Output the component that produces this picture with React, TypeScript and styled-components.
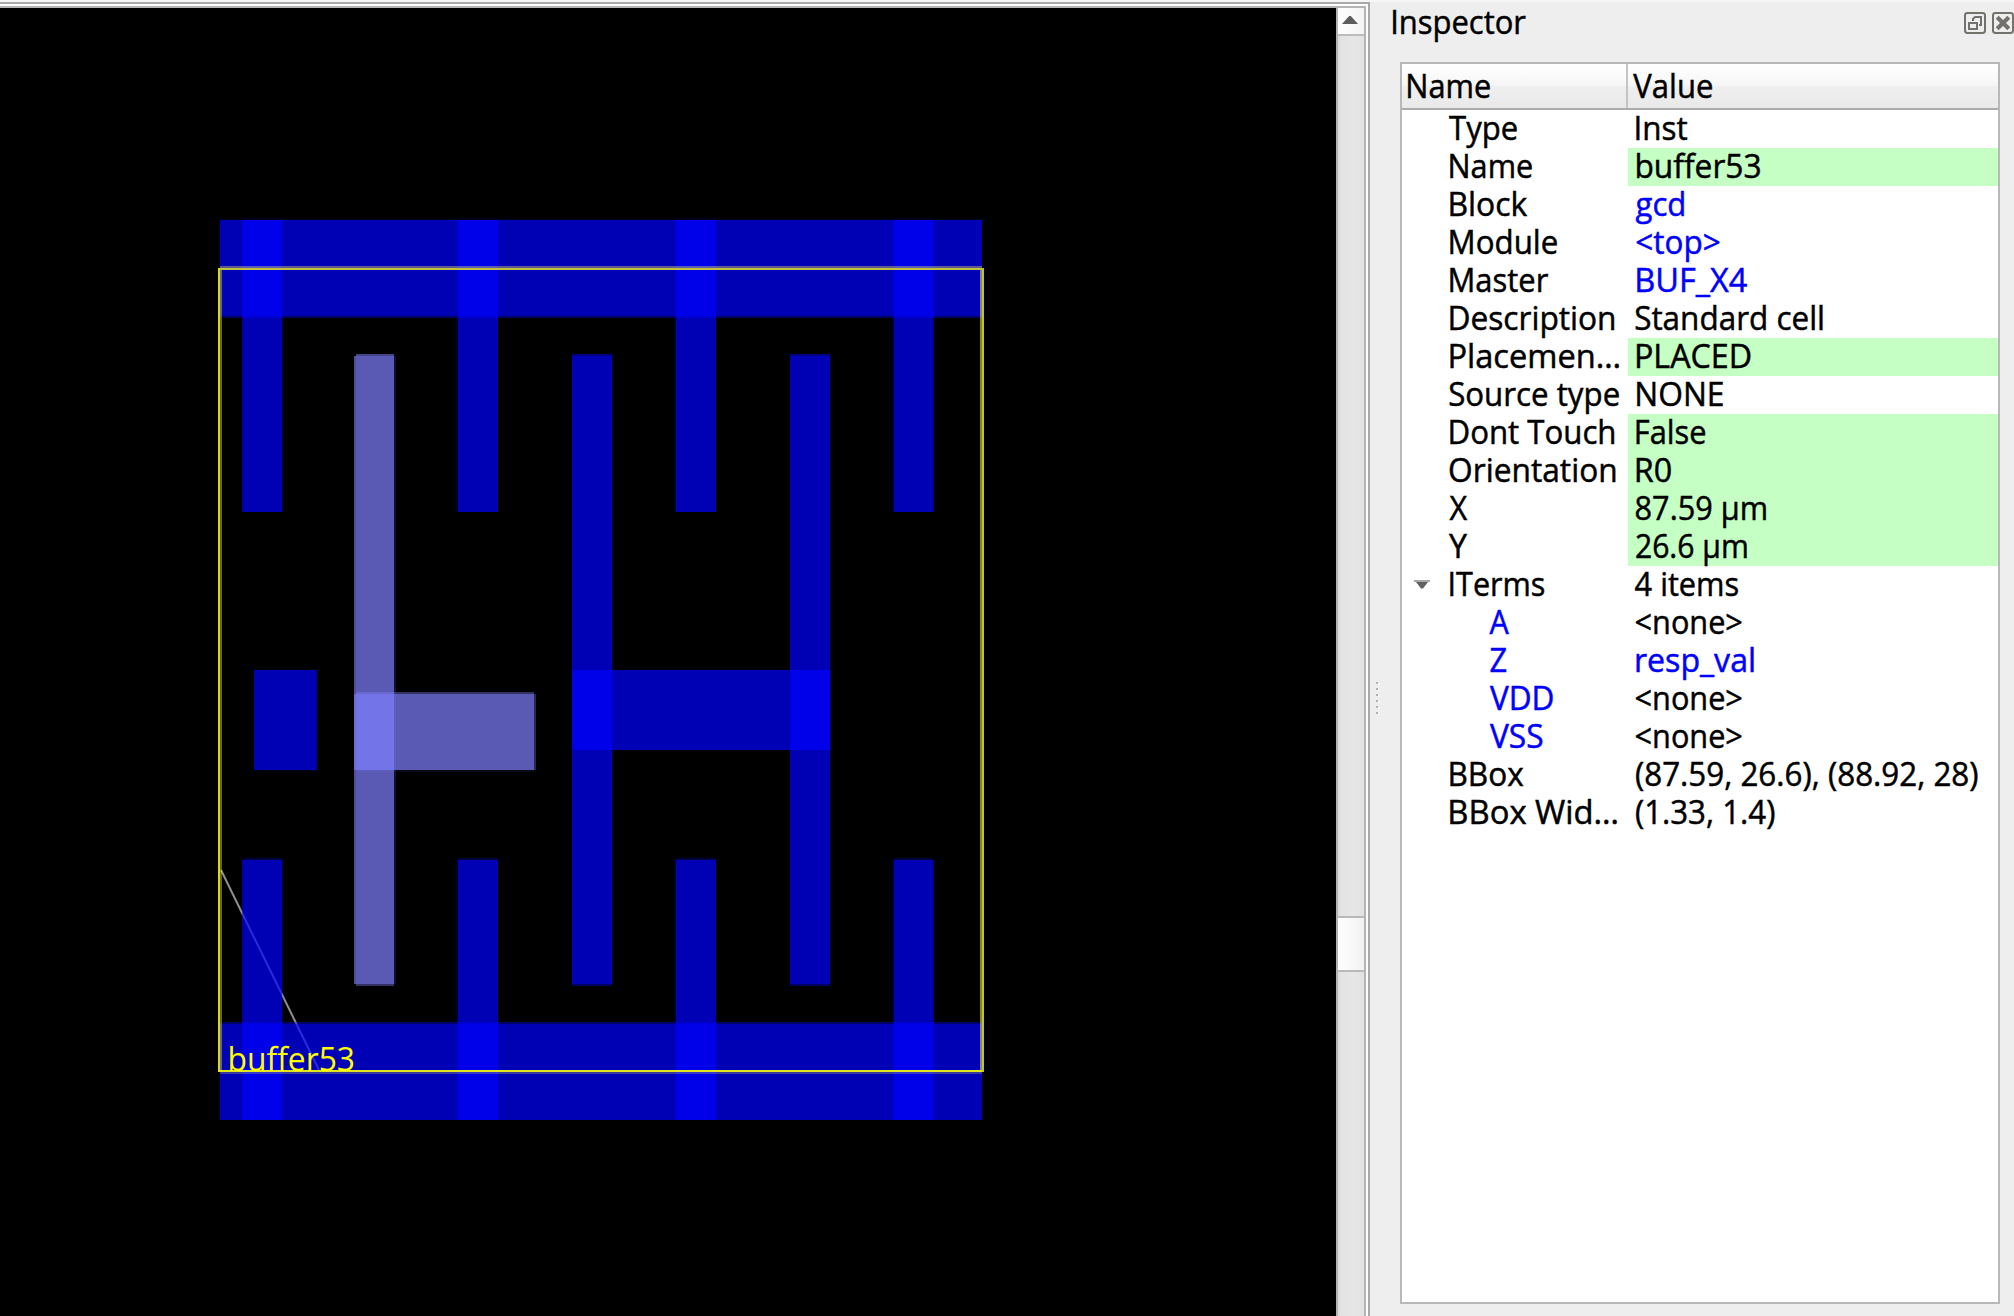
import React from "react";
import styled, { createGlobalStyle } from "styled-components";

const FAMILY = '"Open Sans", "Noto Sans", sans-serif';
const FONT_SIZE = 33.6;

const GlobalStyle = createGlobalStyle`
  html, body { margin: 0; padding: 0; background: #eeeeee; }
  body { overflow: hidden; font-family: ${FAMILY}; }
  * { box-sizing: border-box; }
`;

/* ---------- condensed label ---------- */

const LabelText = styled.span<{ $link?: boolean }>`
  display: block;
  flex: none;
  width: max-content;
  white-space: pre;
  font-family: ${FAMILY};
  font-size: ${FONT_SIZE}px;
  line-height: 38px;
  color: ${(p) => (p.$link ? "#0000ff" : "#000000")};
  -webkit-text-stroke: 0.5px currentColor;
  transform-origin: 0 50%;
`;

let measuring: CanvasRenderingContext2D | null = null;

function inkBox(text: string) {
  if (!measuring) measuring = document.createElement("canvas").getContext("2d");
  if (!measuring) return { left: 0, width: 1 };
  measuring.font = `${FONT_SIZE}px ${FAMILY}`;
  const m = measuring.measureText(text);
  return {
    left: -m.actualBoundingBoxLeft,
    width: m.actualBoundingBoxRight + m.actualBoundingBoxLeft,
  };
}

/* Squeezes the glyphs so that the ink spans `width` and begins `inset` px in. */
function Label({ text, inset, width, link }: { text: string; inset: number; width: number; link?: boolean }) {
  const ink = inkBox(text);
  const scale = (width - 0.8) / ink.width;
  const shift = inset + 0.8 - ink.left * scale;
  return (
    <LabelText $link={link} style={{ transform: `translate(${shift.toFixed(2)}px, -2px) scaleX(${scale.toFixed(4)})` }}>
      {text}
    </LabelText>
  );
}

/* ---------- shell ---------- */

const Window = styled.div`
  display: flex;
  flex-direction: column;
  width: 2014px;
  height: 1316px;
  background: #eeeeee;
  overflow: hidden;
`;

const TopStrip = styled.div`
  flex: none;
  height: 2px;
  background: #f6f6f6;
`;

const Main = styled.div`
  display: flex;
  flex: 1;
  min-height: 0;
`;

const ViewFrame = styled.div`
  flex: none;
  width: 1370px;
  border-top: 2px solid #a9a9a9;
  border-right: 2px solid #a9a9a9;
  padding: 2px 2px 0 0;
  background: #fdfdfd;
  display: flex;
`;

const ScrollArea = styled.div`
  flex: 1;
  display: flex;
  border-top: 2px solid #b4b4b4;
  border-right: 2px solid #b4b4b4;
`;

const Canvas = styled.div`
  flex: none;
  width: 1336px;
  background: #000000;
  overflow: hidden;
  svg { display: block; }
`;

const ScrollBar = styled.div`
  flex: 1;
  display: flex;
  flex-direction: column;
  border-left: 2px solid #b4b4b4;
`;

const ScrollButton = styled.div`
  flex: none;
  height: 28px;
  display: flex;
  justify-content: center;
  padding-top: 8px;
  padding-right: 2px;
  border-bottom: 2px solid #bcbcbc;
  background: linear-gradient(90deg, #ffffff, #f3f3f3);
`;

const Trough = styled.div<{ $height?: number }>`
  flex: ${(p) => (p.$height ? `0 0 ${p.$height}px` : "1")};
  border-left: 2px solid #dcdcdc;
  background: linear-gradient(90deg, #e3e3e3, #e6e6e6 60%, #e2e2e2);
`;

const Thumb = styled.div`
  flex: none;
  height: 56px;
  border-top: 2px solid #b9b9b9;
  border-bottom: 2px solid #b9b9b9;
  background: linear-gradient(90deg, #ffffff, #f2f2f2);
`;

const Grip = styled.div`
  flex: none;
  width: 30px;
  padding: 680px 0 0 6px;
`;

const Dot = styled.div`
  width: 2px;
  height: 2px;
  margin-bottom: 4px;
  background: #b2b2b2;
  box-shadow: 2px 1px 0 #f8f8f8;
`;

/* ---------- inspector ---------- */

const Dock = styled.div`
  flex: 1;
  display: flex;
  flex-direction: column;
  padding-bottom: 12px;
`;

const TitleBar = styled.div`
  flex: none;
  height: 60px;
  display: flex;
  justify-content: space-between;
  align-items: flex-start;
  padding-top: 2px;
  margin-left: -10px;
`;

const DockButtons = styled.div`
  display: flex;
  gap: 6px;
  padding-top: 8px;
`;

const Tree = styled.div`
  flex: 1;
  width: 600px;
  border: 2px solid #b8b8b8;
  background: #ffffff;
`;

const TreeHeader = styled.div`
  display: flex;
  height: 46px;
  border-bottom: 2px solid #ababab;
  background: linear-gradient(#ffffff 0%, #f6f6f6 48%, #efefef 52%, #e9e9e9 100%);
`;

const HeaderCell = styled.div<{ $width?: number }>`
  flex: ${(p) => (p.$width ? `0 0 ${p.$width}px` : "1")};
  padding-top: 4px;
  border-right: ${(p) => (p.$width ? "2px solid #c4c4c4" : "0")};
`;

const Row = styled.div`
  display: grid;
  grid-template-columns: 226px 370px;
  height: 38px;
`;

const NameCell = styled.div<{ $depth: number }>`
  min-width: 0;
  display: flex;
  padding-left: ${(p) => 46 + p.$depth * 40}px;
`;

const ValueCell = styled.div<{ $editable?: boolean }>`
  min-width: 0;
  background: ${(p) => (p.$editable ? "#c6ffc4" : "transparent")};
`;

const Expander = styled.div`
  flex: none;
  width: 46px;
  margin-left: -46px;
  padding: 14px 0 0 12px;
  svg { display: block; }
`;

type Item = {
  name: string;
  ni: number;
  nw: number;
  value: string;
  vi: number;
  vw: number;
  editable?: boolean;
  nameLink?: boolean;
  valueLink?: boolean;
  depth?: number;
  open?: boolean;
};

const items: Item[] = [
  { name: "Type", ni: 0.3, nw: 69.2, value: "Inst", vi: 7.5, vw: 52.2 },
  { name: "Name", ni: 1.5, nw: 82.9, value: "buffer53", vi: 7.5, vw: 125, editable: true },
  { name: "Block", ni: 1.5, nw: 78.1, value: "gcd", vi: 6.7, vw: 49.3, valueLink: true },
  { name: "Module", ni: 1.5, nw: 108, value: "<top>", vi: 7.5, vw: 84.1, valueLink: true },
  { name: "Master", ni: 1.5, nw: 99.1, value: "BUF_X4", vi: 8.3, vw: 110.8, valueLink: true },
  { name: "Description", ni: 1.5, nw: 164.6, value: "Standard cell", vi: 6.3, vw: 188.4 },
  { name: "Placemen…", ni: 1.5, nw: 169.5, value: "PLACED", vi: 8, vw: 114.8, editable: true },
  { name: "Source type", ni: 0.3, nw: 171.1, value: "NONE", vi: 8.3, vw: 86.6 },
  { name: "Dont Touch", ni: 1.5, nw: 164.6, value: "False", vi: 7.8, vw: 70, editable: true },
  { name: "Orientation", ni: 1.2, nw: 166, value: "R0", vi: 7.8, vw: 35.2, editable: true },
  { name: "X", ni: 0.7, nw: 19, value: "87.59 µm", vi: 6.7, vw: 131.4, editable: true },
  { name: "Y", ni: 0.3, nw: 19, value: "26.6 µm", vi: 7, vw: 112, editable: true },
  { name: "ITerms", ni: 1.5, nw: 95, value: "4 items", vi: 5.8, vw: 104.5, open: true },
  { name: "A", ni: 0.6, nw: 20.8, value: "<none>", vi: 6.7, vw: 107.1, depth: 1, nameLink: true },
  { name: "Z", ni: 1.5, nw: 16.4, value: "resp_val", vi: 7.1, vw: 118.6, depth: 1, nameLink: true, valueLink: true },
  { name: "VDD", ni: 1.1, nw: 64.1, value: "<none>", vi: 6.7, vw: 107.1, depth: 1, nameLink: true },
  { name: "VSS", ni: 1.1, nw: 53.1, value: "<none>", vi: 6.7, vw: 107.1, depth: 1, nameLink: true },
  { name: "BBox", ni: 1.5, nw: 73.7, value: "(87.59, 26.6), (88.92, 28)", vi: 7.1, vw: 342.6 },
  { name: "BBox Wid…", ni: 1.5, nw: 167.5, value: "(1.33, 1.4)", vi: 7.1, vw: 139.4 },
];

/* ---------- icons ---------- */

const ICON = "#74726c";

const FloatIcon = () => (
  <svg width="22" height="22" viewBox="0 0 11 11" fill="none" stroke={ICON}>
    <rect x="0.5" y="0.5" width="10" height="10" rx="1.2" />
    <path d="M4.5 4.5V3.5L5.5 2.5H8.5V6.5H7.5" />
    <rect x="2.5" y="5.5" width="4" height="3" />
  </svg>
);

const CloseIcon = () => (
  <svg width="22" height="22" viewBox="0 0 11 11" fill="none" stroke={ICON}>
    <rect x="0.5" y="0.5" width="10" height="10" rx="1.2" />
    <path d="M2.6 2.6L8.4 8.4M8.4 2.6L2.6 8.4" strokeWidth="2.1" />
  </svg>
);

const UpArrow = () => (
  <svg width="16" height="8" viewBox="0 0 16 8">
    <path d="M7.2 0h1.6L16 8H0z" fill="#5c5c5c" />
  </svg>
);

const DownArrow = () => (
  <svg width="16" height="10" viewBox="0 0 16 10">
    <path d="M0 0h16v2H0z" fill="#a8a8a8" />
    <path d="M2 2h12L9 8.4H7z" fill="#606060" />
  </svg>
);

/* ---------- cell layout ---------- */

type Edges = { l?: number; t?: number; r?: number; b?: number };
type Shape = { x: number; y: number; x2: number; y2: number; e?: Edges; picked?: boolean };

const column = (x: number, x2: number, e: Edges): Shape[] => [
  { x, x2, y: 220, y2: 512, e: { ...e, t: 0.08 } },
  { x, x2, y: 860, y2: 1120, e: { ...e, t: 0.35 } },
];

const shapes: Shape[] = [
  { x: 220, x2: 982, y: 220, y2: 316, e: { l: 0.1, t: 0.08, b: 0.55 } },
  { x: 220, x2: 982, y: 1024, y2: 1120, e: { l: 0.1, t: 0.6, r: 0.05 } },
  ...column(244, 282, { l: 0.88, r: 0.15 }),
  ...column(458, 498, { l: 0.22 }),
  ...column(676, 716, { l: 0.24 }),
  ...column(894, 932, { l: 0.28, r: 0.85 }),
  { x: 572, x2: 612, y: 356, y2: 984, e: { t: 0.75, r: 0.12, b: 0.55 } },
  { x: 790, x2: 830, y: 356, y2: 984, e: { t: 0.75, r: 0.12, b: 0.55 } },
  { x: 572, x2: 830, y: 670, y2: 750, e: { r: 0.12 } },
  { x: 254, x2: 316, y: 670, y2: 770, e: { r: 0.5, b: 0.08 } },
  { x: 356, x2: 394, y: 356, y2: 984, e: { l: 0.85, t: 0.75, r: 0.2, b: 0.55 }, picked: true },
  { x: 356, x2: 534, y: 694, y2: 770, e: { l: 0.85, t: 0.55, r: 0.45, b: 0.1 }, picked: true },
];

function Metal({ x, y, x2, y2, e = {}, picked }: Shape) {
  const w = x2 - x;
  const h = y2 - y;
  return (
    <g fill={picked ? "#8080ff" : "#0000ff"} fillOpacity={0.706}>
      <rect x={x} y={y} width={w} height={h} />
      {e.l && <rect x={x - 2} y={y} width={2} height={h} opacity={e.l} />}
      {e.r && <rect x={x2} y={y} width={2} height={h} opacity={e.r} />}
      {e.t && <rect x={x} y={y - 2} width={w} height={2} opacity={e.t} />}
      {e.b && <rect x={x} y={y2} width={w} height={2} opacity={e.b} />}
    </g>
  );
}

const Layout = () => (
  <svg width="1336" height="1308" viewBox="0 8 1336 1308" shapeRendering="crispEdges">
    <path d="M221 870L319 1070" stroke="#909090" strokeWidth="2" shapeRendering="auto" />
    {shapes.map((s, i) => (
      <Metal key={i} {...s} />
    ))}
    <g fill="#ffff50">
      <rect x="220" y="266" width="762" height="2" opacity="0.36" />
      <rect x="220" y="270" width="2" height="800" opacity="0.4" />
      <rect x="980" y="270" width="2" height="800" opacity="0.52" />
      <rect x="220" y="1072" width="762" height="2" opacity="0.22" />
    </g>
    <rect x="218" y="268" width="766" height="2" fill="#c1c13c" />
    <rect x="218" y="268" width="2" height="804" fill="#d8d81e" />
    <rect x="982" y="268" width="2" height="804" fill="#c4c428" />
    <rect x="218" y="1070" width="764" height="2" fill="#e4e41e" />
    <text
      x="227.5"
      y="1071"
      fill="#ffff00"
      fontFamily={FAMILY}
      fontSize="32"
      textLength="127.5"
      lengthAdjust="spacingAndGlyphs"
    >
      buffer53
    </text>
  </svg>
);

export default function App() {
  return (
    <Window>
      <GlobalStyle />
      <TopStrip />
      <Main>
        <ViewFrame>
          <ScrollArea>
            <Canvas>
              <Layout />
            </Canvas>
            <ScrollBar>
              <ScrollButton>
                <UpArrow />
              </ScrollButton>
              <Trough $height={880} />
              <Thumb />
              <Trough />
            </ScrollBar>
          </ScrollArea>
        </ViewFrame>
        <Grip>
          {[0, 1, 2, 3, 4, 5].map((n) => (
            <Dot key={n} />
          ))}
        </Grip>
        <Dock>
          <TitleBar>
            <Label text="Inspector" inset={2.1} width={134.1} />
            <DockButtons>
              <FloatIcon />
              <CloseIcon />
            </DockButtons>
          </TitleBar>
          <Tree>
            <TreeHeader>
              <HeaderCell $width={226}>
                <Label text="Name" inset={5.2} width={83.2} />
              </HeaderCell>
              <HeaderCell>
                <Label text="Value" inset={4.5} width={80.1} />
              </HeaderCell>
            </TreeHeader>
            {items.map((it, i) => (
              <Row key={i}>
                <NameCell $depth={it.depth ?? 0}>
                  {it.open && (
                    <Expander>
                      <DownArrow />
                    </Expander>
                  )}
                  <Label text={it.name} inset={it.ni} width={it.nw} link={it.nameLink} />
                </NameCell>
                <ValueCell $editable={it.editable}>
                  <Label text={it.value} inset={it.vi} width={it.vw} link={it.valueLink} />
                </ValueCell>
              </Row>
            ))}
          </Tree>
        </Dock>
      </Main>
    </Window>
  );
}
